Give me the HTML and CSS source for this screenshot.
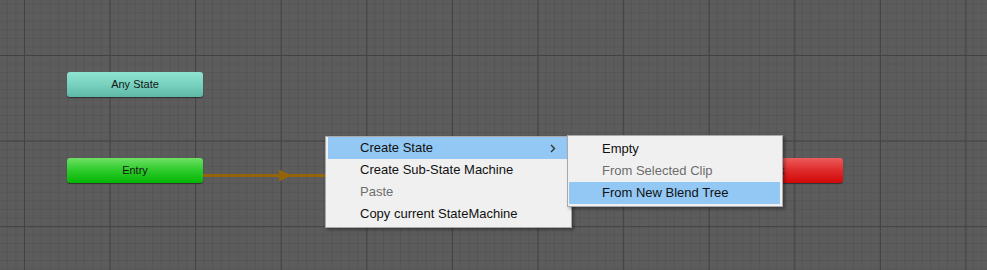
FILE: index.html
```html
<!DOCTYPE html>
<html>
<head>
<meta charset="utf-8">
<link rel="stylesheet" href="styles.css">
</head>
<body>
<div class="canvas">
  <div class="node node-any">Any State</div>
  <div class="node node-entry">Entry</div>
  <div class="node node-exit">Exit</div>
  <svg class="transition" width="140" height="14" viewBox="0 0 140 14">
    <rect x="0" y="6" width="140" height="3" fill="#946508"/>
    <polygon points="76,1.5 88,7.5 76,13.5" fill="#946508"/>
  </svg>

  <div class="menu menu-main">
    <div class="item active">Create State
      <svg class="chev" width="6" height="9" viewBox="0 0 6 9"><path d="M1 1 L4.5 4.5 L1 8" fill="none" stroke="#333" stroke-width="1.4"/></svg>
    </div>
    <div class="item">Create Sub-State Machine</div>
    <div class="item disabled">Paste</div>
    <div class="item">Copy current StateMachine</div>
  </div>

  <div class="menu menu-sub">
    <div class="item">Empty</div>
    <div class="item disabled">From Selected Clip</div>
    <div class="item active">From New Blend Tree</div>
  </div>
</div>
</body>
</html>
```
FILE: styles.css
```css
html, body {
  margin: 0;
  padding: 0;
}
body {
  width: 987px;
  height: 270px;
  overflow: hidden;
}
.canvas {
  position: relative;
  width: 987px;
  height: 270px;
  background-color: #5c5c5c;
  background-image:
    linear-gradient(to right, #434343 0, #434343 1px, transparent 1px),
    linear-gradient(to bottom, #434343 0, #434343 1px, transparent 1px),
    linear-gradient(to right, #555555 0, #555555 1px, transparent 1px),
    linear-gradient(to bottom, #555555 0, #555555 1px, transparent 1px);
  background-size: 85.6px 85.6px, 85.6px 85.6px, 8.56px 8.56px, 8.56px 8.56px;
  background-position: 24px 55px, 24px 55px, 24px 55px, 24px 55px;
  font-family: "Liberation Sans", Arial, sans-serif;
}
.node {
  position: absolute;
  width: 136px;
  height: 25px;
  line-height: 25px;
  border-radius: 3px;
  text-align: center;
  font-size: 11px;
  color: #151515;
  box-shadow: 0 1px 1px rgba(0,0,0,0.45);
  box-sizing: border-box;
}
.node-any {
  left: 67px;
  top: 72px;
  background: linear-gradient(to bottom, #8ee4d0 0%, #78d2bf 50%, #5fb8a7 100%);
}
.node-entry {
  left: 67px;
  top: 158px;
  background: linear-gradient(to bottom, #6fe064 0%, #2ccb2a 50%, #05b505 100%);
}
.node-exit {
  left: 707px;
  top: 158px;
  background: linear-gradient(to bottom, #ec5c5c 0%, #df2a2a 50%, #d10808 100%);
}
.transition {
  position: absolute;
  left: 203px;
  top: 168px;
}
.menu {
  position: absolute;
  background: #f0f0f0;
  border: 1px solid #a9a9a9;
  box-shadow: 2px 2px 3px rgba(0,0,0,0.35);
  font-size: 13px;
  color: #111;
}
.menu-main {
  left: 325px;
  top: 136px;
  width: 247px;
  padding: 0 2px 2px 2px;
  box-sizing: border-box;
  height: 92px;
}
.menu-sub {
  left: 567px;
  top: 135px;
  width: 216px;
  height: 72px;
  box-sizing: border-box;
  padding: 2px 2px 2px 1px;
}
.item {
  position: relative;
  height: 22px;
  line-height: 22px;
  white-space: nowrap;
}
.menu-main .item {
  padding-left: 32px;
}
.menu-sub .item {
  padding-left: 33px;
}
.item.active {
  background: #93c8f4;
}
.item.disabled {
  color: #6d6d6d;
}
.chev {
  position: absolute;
  right: 13px;
  top: 7px;
}
```
